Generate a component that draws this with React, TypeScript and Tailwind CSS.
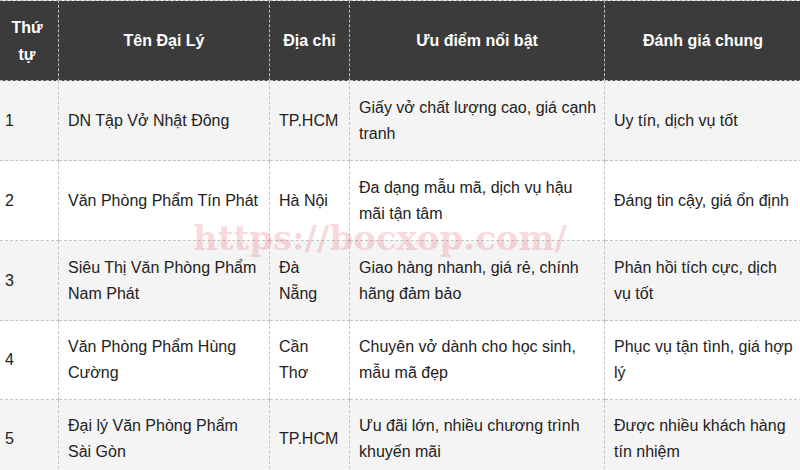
import React from "react";

const rows = [
  ["1", "DN Tập Vở Nhật Đông", "TP.HCM", "Giấy vở chất lượng cao, giá cạnh tranh", "Uy tín, dịch vụ tốt"],
  ["2", "Văn Phòng Phẩm Tín Phát", "Hà Nội", "Đa dạng mẫu mã, dịch vụ hậu mãi tận tâm", "Đáng tin cậy, giá ổn định"],
  ["3", "Siêu Thị Văn Phòng Phẩm Nam Phát", "Đà Nẵng", "Giao hàng nhanh, giá rẻ, chính hãng đảm bảo", "Phản hồi tích cực, dịch vụ tốt"],
  ["4", "Văn Phòng Phẩm Hùng Cường", "Cần Thơ", "Chuyên vở dành cho học sinh, mẫu mã đẹp", "Phục vụ tận tình, giá hợp lý"],
  ["5", "Đại lý Văn Phòng Phẩm Sài Gòn", "TP.HCM", "Ưu đãi lớn, nhiều chương trình khuyến mãi", "Được nhiều khách hàng tín nhiệm"],
];

const heights = ["h-[80px]", "h-[80px]", "h-[80px]", "h-[79px]", "h-[79px]"];
const padR = ["pr-[4px]", "pr-[4px]", "pr-[11px]", "pr-[4px]", "pr-[8px]"];

export default function App() {
  return (
    <div
      className="relative w-[800px] h-[470px] overflow-hidden bg-white"
      style={{ fontFamily: '"Liberation Sans", Arial, sans-serif' }}
    >
      <table className="ml-[-5px] w-[806px] table-fixed border-collapse text-[16px] leading-[26px] text-[#222]">
        <colgroup>
          <col className="w-[63px]" />
          <col className="w-[211px]" />
          <col className="w-[80px]" />
          <col className="w-[255px]" />
          <col className="w-[197px]" />
        </colgroup>
        <thead>
          <tr className="h-[80px] bg-[#3b3b3b] text-white">
            {["Thứ tự", "Tên Đại Lý", "Địa chỉ", "Ưu điểm nổi bật", "Đánh giá chung"].map((h, i) => (
              <th
                key={i}
                className={`border border-dashed border-[#bdbdbd] font-bold text-center align-middle leading-[27px] ${
                  i === 0 ? "px-[14px]" : "px-[10px]"
                }`}
              >
                {h}
              </th>
            ))}
          </tr>
        </thead>
        <tbody>
          {rows.map((r, ri) => (
            <tr key={ri} className={`${heights[ri]} ${ri % 2 === 0 ? "bg-[#f4f4f4]" : "bg-white"}`}>
              {r.map((c, ci) => (
                <td
                  key={ci}
                  className={`border border-dashed border-[#c4c4c4] pl-[9px] align-middle text-left ${padR[ci]}`}
                >
                  {c}
                </td>
              ))}
            </tr>
          ))}
        </tbody>
      </table>
      <div
        className="pointer-events-none absolute left-[193px] top-[221px] whitespace-nowrap text-[34px] font-bold leading-none text-[rgba(232,120,132,0.28)]"
        style={{ fontFamily: '"DejaVu Serif", "Liberation Serif", serif' }}
      >
        https://bocxop.com/
      </div>
    </div>
  );
}
